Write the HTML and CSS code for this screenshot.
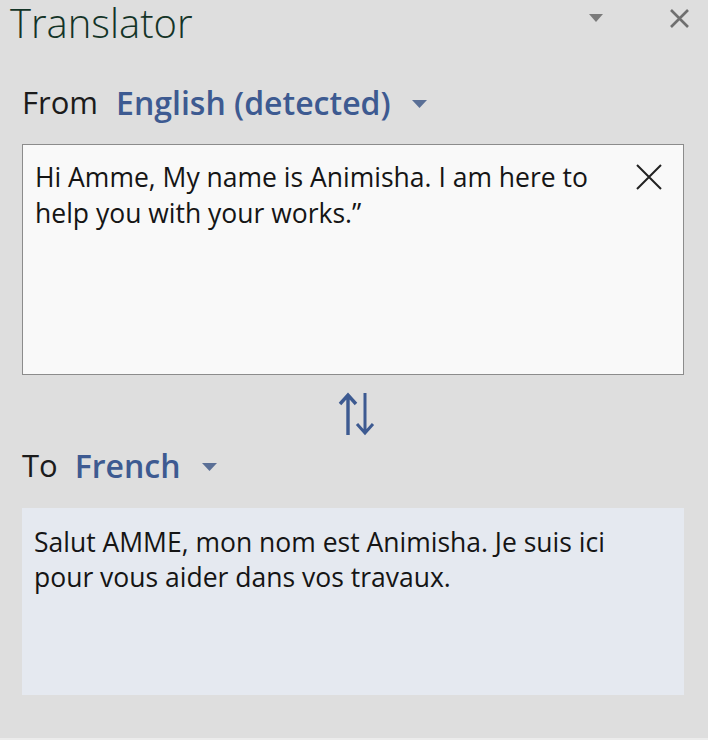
FILE: index.html
```html
<!DOCTYPE html>
<html>
<head>
<meta charset="utf-8">
<link rel="stylesheet" href="styles.css">
</head>
<body>
<div class="pane">
  <div class="titlebar">
    <h1 class="title">Translator</h1>
    <div class="title-actions">
      <svg class="menu-tri" width="14" height="9" viewBox="0 0 14 9"><path d="M0 0 H14 L7 8 Z" fill="#7b7b7b"/></svg>
      <svg class="close" width="21" height="20" viewBox="0 0 21 20"><path d="M2 1 L19 18 M19 1 L2 18" stroke="#6f6f6f" stroke-width="2.6"/></svg>
    </div>
  </div>

  <div class="lang-row from-row">
    <span class="lang-label">From</span>
    <span class="lang-value">English (detected)</span>
    <svg class="lang-tri" width="15" height="8" viewBox="0 0 15 8"><path d="M0 0 H15 L7.5 8 Z" fill="#5a6f96"/></svg>
  </div>

  <div class="source-box">
    <p class="box-text">Hi Amme, My name is Animisha. I am here to help you with your works.”</p>
    <svg class="clear" width="26" height="26" viewBox="0 0 26 26"><path d="M1 1 L25 25 M25 1 L1 25" stroke="#222" stroke-width="2"/></svg>
  </div>

  <div class="swap-row">
    <svg class="swap" width="38" height="46" viewBox="0 0 38 46">
      <path d="M10 44 V4 M2 13 L10 4 L18 13" stroke="#3d5a91" stroke-width="3.4" fill="none"/>
      <path d="M27 2 V42 M19 33 L27 42 L35 33" stroke="#3d5a91" stroke-width="3" fill="none"/>
    </svg>
  </div>

  <div class="lang-row to-row">
    <span class="lang-label">To</span>
    <span class="lang-value">French</span>
    <svg class="lang-tri" width="15" height="8" viewBox="0 0 15 8"><path d="M0 0 H15 L7.5 8 Z" fill="#5a6f96"/></svg>
  </div>

  <div class="target-box">
    <p class="box-text">Salut AMME, mon nom est Animisha. Je suis ici pour vous aider dans vos travaux.</p>
  </div>
</div>
</body>
</html>
```

FILE: styles.css
```css
html, body {
  margin: 0;
  padding: 0;
  background: #dedede;
}
body {
  font-family: "Open Sans", "Noto Sans", sans-serif;
  width: 708px;
  height: 740px;
  overflow: hidden;
}
.pane {
  box-sizing: border-box;
  width: 708px;
  height: 740px;
  background: #dedede;
  border-bottom: 2px solid #ececec;
  padding: 0 24px 0 22px;
  display: flex;
  flex-direction: column;
}
.titlebar {
  display: flex;
  align-items: flex-start;
  justify-content: space-between;
  margin-left: -12px;
  margin-right: -6px;
}
.title {
  margin: 0;
  font-weight: 300;
  font-size: 40px;
  line-height: 46px;
  color: #143427;
}
.title-actions {
  display: flex;
  align-items: flex-start;
  gap: 66px;
  padding-top: 9px;
}
.menu-tri {
  margin-top: 5px;
}
.lang-row {
  display: flex;
  align-items: center;
}
.from-row {
  margin-top: 34px;
  height: 44px;
}
.lang-label {
  font-size: 31px;
  color: #1b1b1b;
  margin-right: 18px;
}
.lang-value {
  font-size: 32px;
  font-weight: 600;
  color: #3d5a91;
  margin-right: 21px;
}
.lang-tri {
  margin-top: 4px;
}
.source-box {
  margin-top: 20px;
  height: 231px;
  box-sizing: border-box;
  border: 1px solid #8c8c8c;
  background: #f9f9f9;
  display: flex;
  justify-content: space-between;
  align-items: flex-start;
  padding: 14px 21px 0 12px;
}
.box-text {
  margin: 0;
  font-size: 26.5px;
  line-height: 36px;
  color: #151515;
  width: 570px;
}
.clear {
  margin-top: 5px;
  flex: none;
}
.swap-row {
  display: flex;
  justify-content: center;
  padding-top: 16px;
  height: 46px;
  margin-left: 8px;
}
.to-row {
  margin-top: 8px;
  height: 40px;
}
.to-row .lang-label {
  margin-right: 17px;
}
.target-box {
  margin-top: 23px;
  height: 187px;
  background: #e5e9f0;
  padding: 17px 21px 0 12px;
  box-sizing: border-box;
}
.target-box .box-text {
  width: 600px;
  line-height: 35px;
}
```
